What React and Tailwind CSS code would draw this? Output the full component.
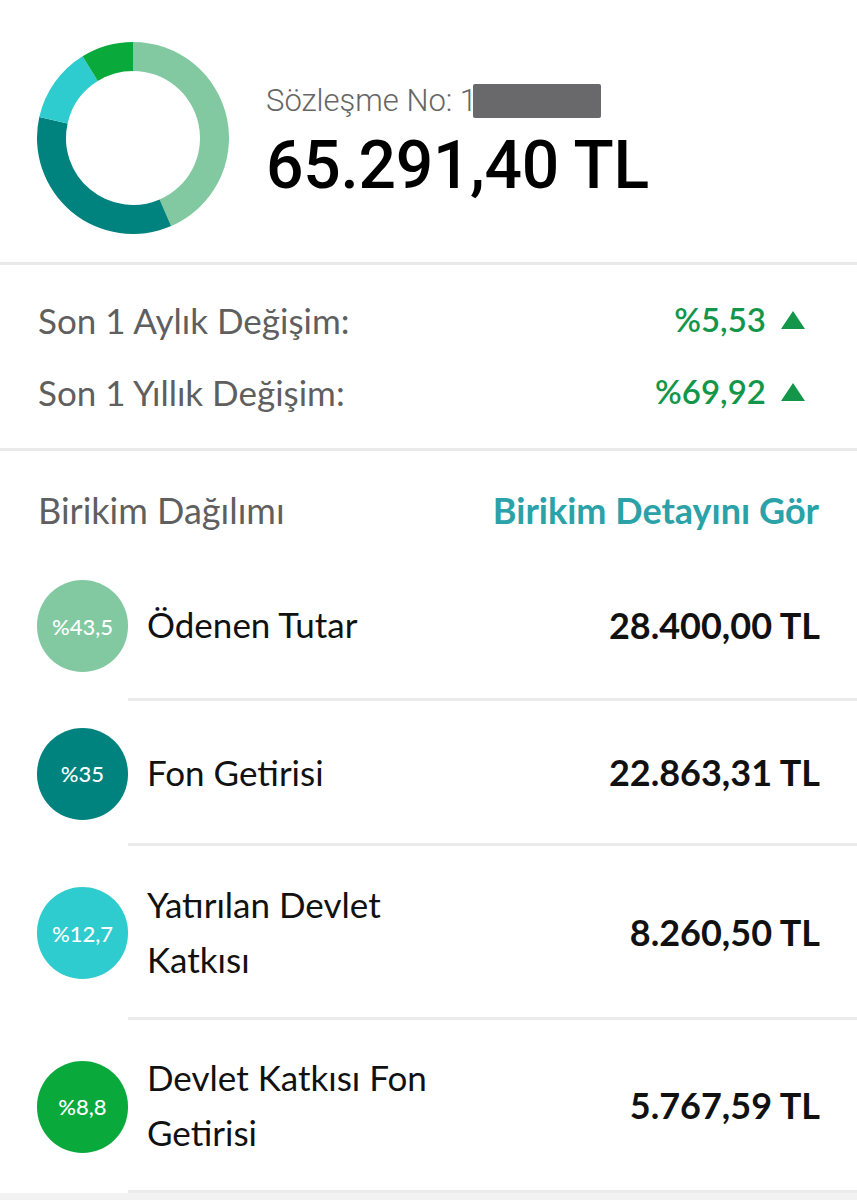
import React from 'react';

const segments = [
  { pct: 43.5, color: '#82c9a1' },
  { pct: 35, color: '#00827f' },
  { pct: 12.7, color: '#2ecbcf' },
  { pct: 8.8, color: '#0aa93c' },
];

const items = [
  { pct: '%43,5', color: 'bg-[#82c9a1]', label: ['Ödenen Tutar'], value: '28.400,00 TL', h: 'h-[150px]' },
  { pct: '%35', color: 'bg-[#00827f]', label: ['Fon Getirisi'], value: '22.863,31 TL', h: 'h-[145px]' },
  { pct: '%12,7', color: 'bg-[#2ecbcf]', label: ['Yatırılan Devlet', 'Katkısı'], value: '8.260,50 TL', h: 'h-[174px]' },
  { pct: '%8,8', color: 'bg-[#0aa93c]', label: ['Devlet Katkısı Fon', 'Getirisi'], value: '5.767,59 TL', h: 'h-[173px]' },
];

// ring slices as filled arc paths
const arc = (a0, a1, ro, ri) => {
  const p = (a, r) => [96 + r * Math.sin(a), 96 - r * Math.cos(a)];
  const large = a1 - a0 > Math.PI ? 1 : 0;
  const [x0, y0] = p(a0, ro);
  const [x1, y1] = p(a1, ro);
  const [x2, y2] = p(a1, ri);
  const [x3, y3] = p(a0, ri);
  return `M${x0} ${y0} A${ro} ${ro} 0 ${large} 1 ${x1} ${y1} L${x2} ${y2} A${ri} ${ri} 0 ${large} 0 ${x3} ${y3} Z`;
};

const Donut = () => {
  let start = 0;
  return (
    <svg width="192" height="192" viewBox="0 0 192 192" className="shrink-0">
      {segments.map((s) => {
        const end = start + (s.pct / 100) * Math.PI * 2;
        const d = arc(start, Math.min(end, Math.PI * 2 - 0.0001), 96, 67);
        start = end;
        return <path key={s.color} d={d} fill={s.color} />;
      })}
    </svg>
  );
};

const Up = () => (
  <svg width="26" height="20" viewBox="0 0 26 20" className="ml-[14px]">
    <polygon points="13,1 25,19 1,19" fill="#13964a" />
  </svg>
);

export default function App() {
  return (
    <div className="w-[857px] min-h-[1200px] bg-white font-['Lato',sans-serif]">
      {/* header with donut */}
      <div className="h-[262px] flex items-start pl-[37px] pt-[42px]">
        <Donut />
        <div className="ml-[37px] pt-[41px]">
          <div className="flex items-center h-[36px] text-[31px] text-[#666] font-['Roboto',sans-serif] font-light">
            <span>Sözleşme No: 1</span>
            <span className="inline-block w-[128px] h-[34px] -ml-[4px] rounded-[2px] bg-[#69696c]" />
          </div>
          <div className="mt-[4px] text-[66px] leading-[86px] font-medium text-black font-['Roboto',sans-serif] tracking-[-0.3px]">
            65.291,40 TL
          </div>
        </div>
      </div>
      <div className="h-[3px] bg-[#e9e9e9]" />

      {/* changes */}
      <div className="pt-[19px] pb-[20px] px-[38px]">
        <div className="h-[72px] flex items-center justify-between">
          <span className="text-[35px] text-[#5f5f5f]">Son 1 Aylık Değişim:</span>
          <span className="flex items-center pr-[13px] text-[33px] font-semibold text-[#13964a]">
            %5,53
            <Up />
          </span>
        </div>
        <div className="h-[72px] flex items-center justify-between">
          <span className="text-[35px] text-[#5f5f5f]">Son 1 Yıllık Değişim:</span>
          <span className="flex items-center pr-[13px] text-[33px] font-semibold text-[#13964a]">
            %69,92
            <Up />
          </span>
        </div>
      </div>
      <div className="h-[3px] bg-[#e9e9e9]" />

      {/* distribution header */}
      <div className="h-[100px] pt-[18px] px-[38px] flex items-center justify-between">
        <span className="text-[36px] text-[#5f5f5f]">Birikim Dağılımı</span>
        <span className="text-[36px] font-bold text-[#2aa2a8]">Birikim Detayını Gör</span>
      </div>

      {/* rows */}
      {items.map((it) => (
        <div key={it.pct} className={`flex ${it.h}`}>
          <div className="w-[128px] shrink-0 pl-[37px] flex items-center">
            <div
              className={`w-[92px] h-[92px] rounded-full ${it.color} flex items-center justify-center text-white text-[22px] font-medium`}
            >
              {it.pct}
            </div>
          </div>
          <div className="flex-1 flex items-center justify-between pl-[19px] pr-[37px] border-b-[3px] border-[#ebebeb]">
            <div className="text-[35px] leading-[55px] text-[#111]">
              {it.label.map((l) => (
                <div key={l}>{l}</div>
              ))}
            </div>
            <div className="text-[36px] font-bold text-[#111]">{it.value}</div>
          </div>
        </div>
      ))}
      <div className="h-[8px] bg-[#f2f2f2]" />
    </div>
  );
}
